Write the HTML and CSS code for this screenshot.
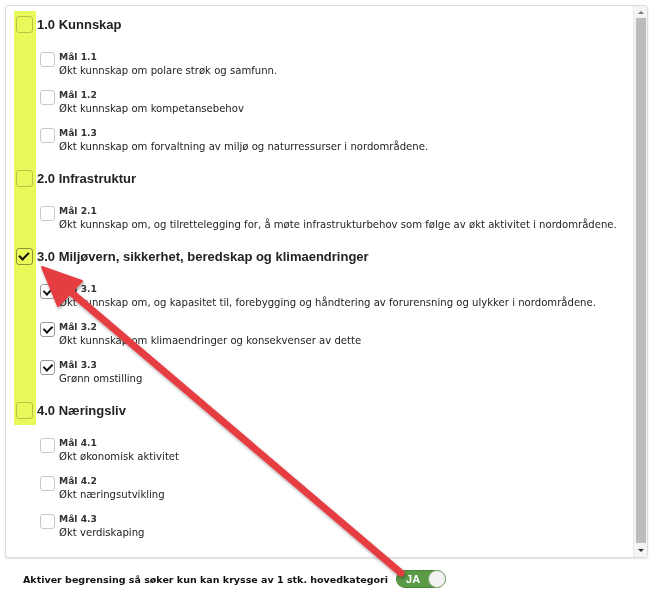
FILE: index.html
```html
<!DOCTYPE html>
<html lang="no">
<head>
<meta charset="UTF-8">
<meta name="viewport" content="width=device-width, initial-scale=1.0">
<title>Kategorier</title>
<link rel="stylesheet" href="styles.css">
</head>
<body>
<div class="panel">
    <div class="list">
        <div class="section">
            <label class="heading"><span class="box"></span>1.0 Kunnskap</label>
            <div class="items">
                <label class="item"><span class="box small"></span><span class="txt"><b>Mål 1.1</b><span>Økt kunnskap om polare strøk og samfunn.</span></span></label>
                <label class="item"><span class="box small"></span><span class="txt"><b>Mål 1.2</b><span>Økt kunnskap om kompetansebehov</span></span></label>
                <label class="item"><span class="box small"></span><span class="txt"><b>Mål 1.3</b><span>Økt kunnskap om forvaltning av miljø og naturressurser i nordområdene.</span></span></label>
            </div>
        </div>
        <div class="section">
            <label class="heading"><span class="box"></span>2.0 Infrastruktur</label>
            <div class="items">
                <label class="item"><span class="box small"></span><span class="txt"><b>Mål 2.1</b><span>Økt kunnskap om, og tilrettelegging for, å møte infrastrukturbehov som følge av økt aktivitet i nordområdene.</span></span></label>
            </div>
        </div>
        <div class="section">
            <label class="heading"><span class="box checked"></span>3.0 Miljøvern, sikkerhet, beredskap og klimaendringer</label>
            <div class="items">
                <label class="item"><span class="box small checked"></span><span class="txt"><b>Mål 3.1</b><span>Økt kunnskap om, og kapasitet til, forebygging og håndtering av forurensning og ulykker i nordområdene.</span></span></label>
                <label class="item"><span class="box small checked"></span><span class="txt"><b>Mål 3.2</b><span>Økt kunnskap om klimaendringer og konsekvenser av dette</span></span></label>
                <label class="item"><span class="box small checked"></span><span class="txt"><b>Mål 3.3</b><span>Grønn omstilling</span></span></label>
            </div>
        </div>
        <div class="section">
            <label class="heading"><span class="box"></span>4.0 Næringsliv</label>
            <div class="items">
                <label class="item"><span class="box small"></span><span class="txt"><b>Mål 4.1</b><span>Økt økonomisk aktivitet</span></span></label>
                <label class="item"><span class="box small"></span><span class="txt"><b>Mål 4.2</b><span>Økt næringsutvikling</span></span></label>
                <label class="item"><span class="box small"></span><span class="txt"><b>Mål 4.3</b><span>Økt verdiskaping</span></span></label>
            </div>
        </div>
    </div>
    <div class="scrollbar">
        <span class="arrow up"></span>
        <span class="thumb"></span>
        <span class="arrow down"></span>
    </div>
</div>

<div class="footer">
    <span class="footer-label">Aktiver begrensing så søker kun kan krysse av 1 stk. hovedkategori</span>
    <span class="toggle"><span class="toggle-text">JA</span><span class="knob"></span></span>
</div>

<!-- annotation overlay -->
<div class="marker"></div>
<svg class="pointer" width="655" height="598" viewBox="0 0 655 598">
    <defs>
        <filter id="shade" x="-10%" y="-10%" width="120%" height="120%">
            <feDropShadow dx="1" dy="2" stdDeviation="1.5" flood-color="#000" flood-opacity="0.35"/>
        </filter>
    </defs>
    <g filter="url(#shade)" fill="#e63e43" stroke="#e63e43">
        <line x1="401" y1="573" x2="66" y2="288" stroke-width="7" stroke-linecap="round"/>
        <polygon points="42,267 82,281 58,306" stroke-width="2" stroke-linejoin="round"/>
    </g>
</svg>
</body>
</html>
```
FILE: styles.css
```css
body {
    margin: 0;
    background: #fff;
    font-family: "DejaVu Sans", Verdana, sans-serif;
    color: #222;
    position: relative;
    width: 655px;
    height: 598px;
    overflow: hidden;
}

.panel {
    display: flex;
    margin: 5px 7px 0 5px;
    height: 551px;
    border: 1px solid #dcdcdc;
    border-radius: 3px;
    box-shadow: 0 1px 2px rgba(0, 0, 0, 0.12);
}

.list {
    flex: 1;
    padding: 10px 0 0 10px;
}

.section {
    margin-bottom: 16px;
}

.heading {
    display: flex;
    align-items: center;
    gap: 4px;
    height: 17px;
    font-family: "Liberation Sans", Arial, sans-serif;
    font-weight: bold;
    font-size: 13px;
    color: #222;
}

.items {
    display: flex;
    flex-direction: column;
    gap: 10px;
    margin: 17px 0 0 24px;
}

.item {
    display: flex;
    align-items: flex-start;
    gap: 4px;
}

.item .box {
    margin-top: 2px;
}

.txt {
    display: flex;
    flex-direction: column;
    font-size: 10.1px;
    line-height: 14px;
    color: #222;
}

.txt b {
    font-size: 9.2px;
    color: #333;
}

.box {
    width: 15px;
    height: 15px;
    border: 1px solid #c8c8c8;
    border-radius: 3px;
    background: #fff;
    position: relative;
    flex: none;
}

.box.small {
    width: 13px;
    height: 13px;
}

.box.checked {
    border-color: #9a9a9a;
}

.box.checked::after {
    content: "";
    position: absolute;
    left: 4px;
    top: 1px;
    width: 4px;
    height: 8px;
    border: solid #111;
    border-width: 0 2.5px 2.5px 0;
    transform: rotate(45deg);
}

.box.small.checked::after {
    left: 4px;
    top: 1px;
    height: 7px;
}

.scrollbar {
    width: 13px;
    display: flex;
    flex-direction: column;
    align-items: center;
    background: #f4f4f4;
    border-left: 1px solid #e8e8e8;
}

.arrow {
    width: 0;
    height: 0;
    margin: 5px 0 4px;
    border-left: 3px solid transparent;
    border-right: 3px solid transparent;
}

.arrow.up {
    border-bottom: 3px solid #777;
}

.arrow.down {
    border-top: 3px solid #333;
    margin: 6px 0 5px;
}

.thumb {
    flex: 1;
    width: 10px;
    background: #bcbcbc;
}

.footer {
    display: flex;
    align-items: center;
    gap: 8px;
    padding: 12px 0 0 23px;
}

.footer-label {
    font-weight: bold;
    font-size: 9.5px;
    color: #111;
}

.toggle {
    display: flex;
    align-items: center;
    justify-content: space-between;
    width: 50px;
    height: 18px;
    box-sizing: border-box;
    border-radius: 9px;
    background: #5b9a46;
    border: 1px solid #4a8638;
    padding-left: 9px;
}

.toggle-text {
    color: #fff;
    font-family: "Liberation Sans", Arial, sans-serif;
    font-weight: bold;
    font-size: 11px;
}

.knob {
    width: 18px;
    height: 18px;
    box-sizing: border-box;
    margin-right: -1px;
    border-radius: 50%;
    background: #f3f3f3;
    border: 1px solid #8aaa80;
}

.marker {
    position: absolute;
    left: 14px;
    top: 11px;
    width: 22px;
    height: 414px;
    background: #e9f95a;
    mix-blend-mode: multiply;
}

.pointer {
    position: absolute;
    left: 0;
    top: 0;
}
```
